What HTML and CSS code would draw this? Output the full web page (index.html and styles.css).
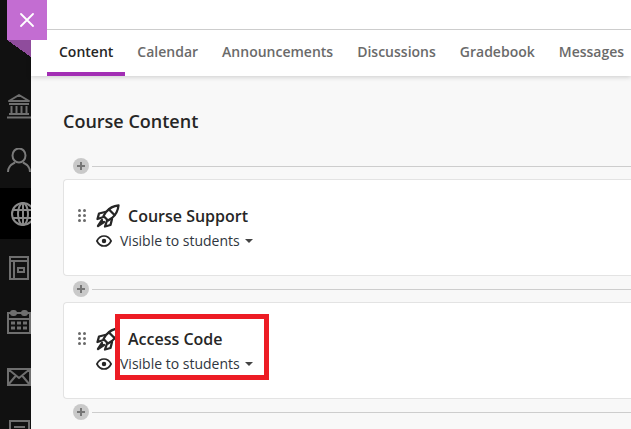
FILE: index.html
```html
<!DOCTYPE html>
<html lang="en">
<head>
<meta charset="utf-8">
<title>Course Content</title>
<link rel="stylesheet" href="styles.css">
</head>
<body>
<div class="app">
  <nav class="rail">
    <div class="rail-item">
      <svg width="31" height="26" viewBox="0 0 31 26" fill="none" stroke="#6f6f6f" stroke-width="2"><path d="M9 8 19 2 29 8Z" stroke-linejoin="round"/><path d="M9 11h20M11.500 13v7M16.500 13v7M21.500 13v7M26.500 13v7M9 21h20M7 24.500h24"/></svg>
    </div>
    <div class="rail-item rail-person">
      <svg width="31" height="24" viewBox="0 0 31 24" fill="none" stroke="#7a7a7a" stroke-width="2"><ellipse cx="19" cy="7.500" rx="6.500" ry="7"/><path d="M8 24c0-6 4-8 7-9.500M30 24c0-6-4-8-7-9.500"/></svg>
    </div>
    <div class="rail-item rail-globe">
      <svg width="31" height="24" viewBox="0 0 31 24" fill="none" stroke="#8a8a8a" stroke-width="2"><circle cx="23" cy="12" r="11"/><ellipse cx="23" cy="12" rx="5" ry="11"/><path d="M12 8h20M12 16h20M23 1v22"/></svg>
    </div>
    <div class="rail-item">
      <svg width="31" height="24" viewBox="0 0 31 24" fill="none" stroke="#6f6f6f" stroke-width="2"><path d="M10 1h18v22H10zM10 5h18M14 5v18M18 12h6v4h-6z"/></svg>
    </div>
    <div class="rail-item">
      <svg width="31" height="24" viewBox="0 0 31 24" stroke="#6f6f6f" stroke-width="2" fill="none"><path d="M8 3h22v20H8zM8 9h22"/><rect x="11" y="1" width="5" height="4" rx="2"/><rect x="22" y="1" width="5" height="4" rx="2"/><path d="M11 13h4M17 13h4M23 13h4M11 18h4M17 18h4M23 18h4" stroke-width="3"/></svg>
    </div>
    <div class="rail-item">
      <svg width="31" height="18" viewBox="0 0 31 18" stroke="#6f6f6f" stroke-width="2" fill="none"><path d="M8 1h22v16H8zM8 1l11 9 11-9M8 17l8-9.500M30 17l-8-9.500"/></svg>
    </div>
    <div class="rail-item rail-note">
      <svg width="31" height="22" viewBox="0 0 31 22" stroke="#6f6f6f" stroke-width="2" fill="none"><path d="M10 1h19v22H10zM14 7h11M14 12h11"/></svg>
    </div>
  </nav>

  <main class="main">
    <header class="top">
      <div class="top-blank"></div>
      <div class="tabs">
        <span class="tab tab-active">Content</span>
        <span class="tab">Calendar</span>
        <span class="tab">Announcements</span>
        <span class="tab">Discussions</span>
        <span class="tab">Gradebook</span>
        <span class="tab">Messages</span>
      </div>
    </header>

    <section class="content">
      <h1 class="title">Course Content</h1>

      <div class="adder"><span class="plus"></span><span class="rule"></span></div>

      <article class="card">
        <span class="grip"><i></i><i></i><i></i><i></i><i></i><i></i></span>
        <div class="card-body">
          <div class="card-head">
            <svg class="rocket" width="24" height="24" viewBox="0 0 24 24" fill="none" stroke="#262626" stroke-width="2.300" stroke-linejoin="round" stroke-linecap="round"><path d="M22.500 1.500C17 2 13 4.500 10 8L7.500 12l4.500 4.500 4-2.500c3.500-3 6-7 6.500-12.500Z"/><path d="M9 8 3 9.500 1.500 15l6-2M16 15 14.500 21 9 22.500l2-6"/><path d="M6 16 2 22l6-4" fill="#262626"/><path d="M13 5.500l5.500 5.500"/></svg>
            <h2 class="card-title">Course Support</h2>
          </div>
          <div class="card-meta">
            <svg class="eye" width="16" height="12" viewBox="0 0 16 12" fill="none" stroke="#262626" stroke-width="1.700"><path d="M.9 6C2.500 2.800 5 1 8 1s5.500 1.800 7.100 5C13.500 9.200 11 11 8 11S2.500 9.200.9 6Z"/><circle cx="8" cy="6" r="1.400" fill="#262626"/></svg>
            <span class="vis">Visible to students</span><span class="caret"></span>
          </div>
        </div>
      </article>

      <div class="adder"><span class="plus"></span><span class="rule"></span></div>

      <article class="card">
        <span class="grip"><i></i><i></i><i></i><i></i><i></i><i></i></span>
        <div class="card-body">
          <div class="card-head">
            <svg class="rocket" width="24" height="24" viewBox="0 0 24 24" fill="none" stroke="#262626" stroke-width="2.300" stroke-linejoin="round" stroke-linecap="round"><path d="M22.500 1.500C17 2 13 4.500 10 8L7.500 12l4.500 4.500 4-2.500c3.500-3 6-7 6.500-12.500Z"/><path d="M9 8 3 9.500 1.500 15l6-2M16 15 14.500 21 9 22.500l2-6"/><path d="M6 16 2 22l6-4" fill="#262626"/><path d="M13 5.500l5.500 5.500"/></svg>
            <h2 class="card-title">Access Code</h2>
          </div>
          <div class="card-meta">
            <svg class="eye" width="16" height="12" viewBox="0 0 16 12" fill="none" stroke="#262626" stroke-width="1.700"><path d="M.9 6C2.500 2.800 5 1 8 1s5.500 1.800 7.100 5C13.500 9.200 11 11 8 11S2.500 9.200.9 6Z"/><circle cx="8" cy="6" r="1.400" fill="#262626"/></svg>
            <span class="vis">Visible to students</span><span class="caret"></span>
          </div>
        </div>
      </article>

      <div class="adder"><span class="plus"></span><span class="rule"></span></div>
    </section>
  </main>

  <div class="close-tab">
    <svg width="14" height="14" viewBox="0 0 14 14" stroke="#fff" stroke-width="1.800" stroke-linecap="round"><path d="M1 1l12 12M13 1 1 13"/></svg>
  </div>
  <div class="fold"></div>
  <div class="highlight"></div>
</div>
</body>
</html>
```
FILE: styles.css
```css
* { box-sizing: border-box; }
html, body { margin: 0; height: 100%; }
body { overflow: hidden; background: #f8f8f8; font-family: "Open Sans", sans-serif; color: #262626; }
.app { display: flex; width: 631px; height: 429px; position: relative; overflow: hidden; }

.rail { width: 31px; flex: none; background: #111; overflow: hidden; padding-top: 76px; display: grid; grid-template-rows: 60px 52px 51px 58px 50px 59px 23px; }
.rail-item { display: flex; align-items: center; overflow: hidden; }
.rail-item svg { flex: none; display: block; }
.rail-person { padding-bottom: 4px; }
.rail-globe { background: #000; }
.rail-note { align-items: flex-start; padding-top: 14px; }

.main { flex: 1; min-width: 0; display: flex; flex-direction: column; }
.top { background: #fff; box-shadow: 0 1px 5px rgba(0,0,0,.18); position: relative; }
.top-blank { height: 30px; border-bottom: 1px solid #cdcdcd; }
.tabs { display: flex; height: 46px; padding-left: 16px; white-space: nowrap; }
.tab { font-size: 14px; font-weight: 600; color: #6a6a6a; padding: 13px 12px 0; line-height: 17px; }
.tab-active { color: #262626; border-bottom: 4px solid #a22eb4; }

.content { padding: 0 0 0 32px; flex: 1; margin-right: -1px; }
.title { margin: 0; padding-top: 33px; height: 77px; font-size: 18px; line-height: 25px; font-weight: 600; color: #262626; }
.adder { display: flex; align-items: center; height: 26px; margin-left: 10px; gap: 3px; }
.plus { width: 16px; height: 16px; flex: none; border-radius: 50%; background: #c9c9c9; position: relative; }
.plus::before, .plus::after { content: ""; position: absolute; background: #767676; }
.plus::before { left: 4px; right: 4px; top: 7px; height: 2px; }
.plus::after { top: 4px; bottom: 4px; left: 7px; width: 2px; }
.rule { flex: 1; height: 1px; background: #cdcdcd; }

.card { height: 97px; background: #fff; border: 1px solid #e3e3e3; border-right: 0; border-radius: 4px 0 0 4px; display: flex; align-items: flex-start; padding: 23px 0 0 14px; }
.grip { width: 8px; display: grid; grid-template-columns: 3px 3px; gap: 2px; margin-top: 6px; flex: none; }
.grip i { width: 3px; height: 3px; border-radius: 50%; background: #6a6a6a; }
.card-body { margin-left: 10px; }
.card-head { display: flex; align-items: center; height: 26px; }
.rocket { flex: none; }
.card-title { margin: 0 0 0 8px; font-size: 16px; font-weight: 600; line-height: 22px; color: #262626; }
.card-meta { display: flex; align-items: center; height: 24px; margin-top: -1px; }
.eye { margin: 1px 8px 0 0; flex: none; }
.vis { font-size: 14px; line-height: 19px; color: #2f3640; }
.caret { width: 0; height: 0; margin: 1px 0 0 5px; border: 4px solid transparent; border-top-color: #444; border-bottom: 0; }

.close-tab { position: absolute; left: 7px; top: 0; width: 40px; height: 40px; background: #c36dd2; display: flex; align-items: center; justify-content: center; }
.fold { position: absolute; left: 7px; top: 40px; width: 24px; height: 17px; background: linear-gradient(to top right, transparent 50%, #8f4c9c 50%); }
.highlight { position: absolute; left: 115px; top: 314px; width: 154px; height: 66px; border: 5px solid #ed1c24; }
```
